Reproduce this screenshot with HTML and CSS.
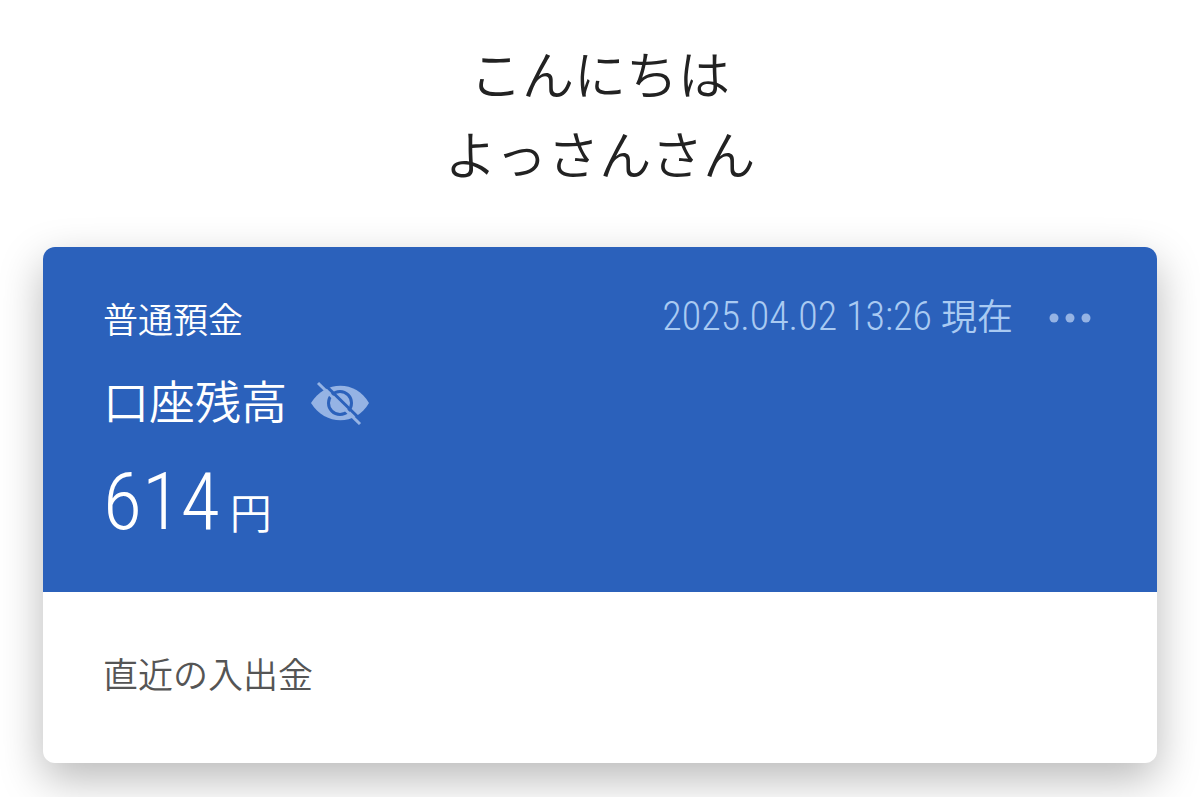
FILE: index.html
```html
<!DOCTYPE html>
<html lang="ja">

<head>
    <meta charset="UTF-8">
    <meta name="viewport" content="width=device-width, initial-scale=1.0">
    <title>口座残高</title>
    <link rel="stylesheet" href="styles.css">
</head>

<body>
    <header>
        <h1>こんにちは<br>よっさんさん</h1>
    </header>

    <main class="card">
        <section class="account">
            <div class="account-top">
                <p class="account-type">普通預金</p>
                <div class="account-info">
                    <time datetime="2025-04-02T13:26">2025.04.02 13:26 <span class="time-label">現在</span></time>
                    <button type="button" class="menu-button" aria-label="メニュー">
                        <svg width="42" height="10" viewBox="0 0 42 10">
                            <circle cx="5" cy="5" r="4.5" />
                            <circle cx="21" cy="5" r="4.5" />
                            <circle cx="37" cy="5" r="4.5" />
                        </svg>
                    </button>
                </div>
            </div>
            <div class="balance-title">
                <h2>口座残高</h2>
                <button type="button" class="eye-button" aria-label="残高を隠す">
                    <svg width="60" height="44" viewBox="0 0 60 44">
                        <path d="M0 22C14 -1 45 -1 58 22C45 45 14 45 0 22Z" />
                        <circle class="eye-ring" cx="29" cy="22" r="11.5" />
                        <path class="eye-gap" d="M10 0L52 41" />
                        <path class="eye-slash" d="M7 2L49 43" />
                    </svg>
                </button>
            </div>
            <p class="balance">614<span class="yen">円</span></p>
        </section>
        <section class="history">
            <h2>直近の入出金</h2>
        </section>
    </main>
</body>

</html>
```

FILE: styles.css
```css
body {
    font-family: "Roboto Condensed", Roboto, "Noto Sans CJK JP DemiLight", "Noto Sans CJK JP", sans-serif;
    font-weight: 300;
    margin: 0;
    min-height: 100vh;
    background-color: #fff;
    color: #222;
}

h1,
h2,
p {
    margin: 0;
    font-weight: 300;
}

button {
    display: flex;
    padding: 0;
    border: none;
    background: none;
}

svg {
    fill: #95b3e4;
}

header {
    padding: 38px 0 49px;
    text-align: center;
}

h1 {
    font-size: 52px;
    font-weight: 400;
    line-height: 80px;
}

.card {
    margin: 0 43px;
    border-radius: 12px;
    overflow: hidden;
    background-color: #fff;
    box-shadow: 0 16px 44px rgba(0, 0, 0, 0.28);
}

.account {
    padding: 44px 60px 32px;
    background-color: #2b61bb;
    color: #fff;
}

.account-top,
.account-info,
.balance-title {
    display: flex;
    align-items: center;
}

.account-top {
    align-items: flex-start;
    justify-content: space-between;
}

.account-type {
    font-size: 35px;
    line-height: 62px;
}

.account-info {
    gap: 36px;
    margin-right: 6px;
    font-size: 40px;
    line-height: 52px;
    color: #a9caf2;
}

.time-label {
    font-size: 36px;
}

.balance-title {
    gap: 24px;
    margin-top: 14px;
}

.balance-title h2 {
    font-size: 46px;
    line-height: 72px;
}

.eye-ring,
.eye-gap,
.eye-slash {
    fill: none;
    stroke: #2b61bb;
    stroke-width: 3px;
}

.eye-slash {
    stroke: #95b3e4;
}

.balance {
    margin-top: 18px;
    font-size: 80px;
    line-height: 90px;
}

.yen {
    margin-left: 10px;
    font-size: 42px;
}

.history {
    padding: 57px 60px 58px;
}

.history h2 {
    font-size: 35px;
    line-height: 56px;
    color: #555;
}
```
